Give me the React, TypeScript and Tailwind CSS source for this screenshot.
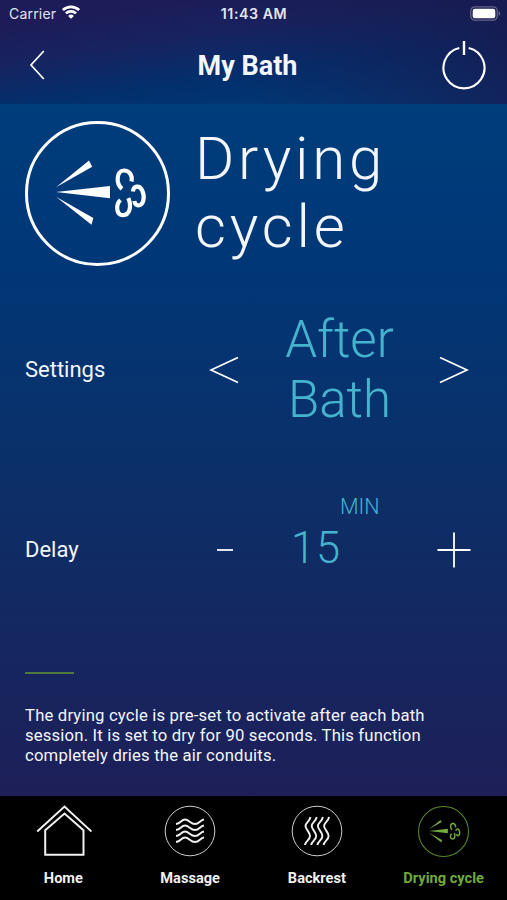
import { ReactNode } from "react"
import clsx from "clsx"

interface IconProps {
    className?: string
}

function WifiIcon({ className }: IconProps) {
    return (
        <svg viewBox="0 0 18 14" fill="none" stroke="currentColor" strokeWidth="2.7" className={className}>
            <path d="M0.9 5.1a11.6 11.6 0 0 1 16.2 0" />
            <path d="M3.9 8.4a7.3 7.3 0 0 1 10.2 0" />
            <path d="M9 13.8l-2.9-2.9a4.2 4.2 0 0 1 5.8 0z" fill="currentColor" stroke="none" />
        </svg>
    )
}

function BatteryIcon({ className }: IconProps) {
    return (
        <svg viewBox="0 0 31 15" className={className}>
            <rect x="0.8" y="0.8" width="26.4" height="13.4" rx="4" fill="none" stroke="#66648c" strokeWidth="1.2" />
            <rect x="2.7" y="2.7" width="22.6" height="9.6" rx="2.2" fill="white" />
            <path d="M28.6 5.2c2.2 1 2.2 3.6 0 4.6z" fill="#66648c" />
        </svg>
    )
}

function PowerIcon({ className }: IconProps) {
    return (
        <svg viewBox="0 0 44 50" fill="none" stroke="white" strokeWidth="2.1" className={className}>
            <path d="M17.3 7.9a20.5 20.5 0 1 0 9.4 0" />
            <path d="M22 1v14" strokeWidth="2.4" />
        </svg>
    )
}

function ChevronIcon({ className }: IconProps) {
    return (
        <svg viewBox="0 0 16 30" fill="none" stroke="white" strokeWidth="1.7" className={className}>
            <path d="M14.8 1L2 15l12.8 14" />
        </svg>
    )
}

function AngleIcon({ className }: IconProps) {
    return (
        <svg viewBox="0 0 30 28" fill="none" stroke="white" strokeWidth="1.8" className={className}>
            <path d="M29 1.5L2 14l27 12.5" />
        </svg>
    )
}

interface DryingIconProps extends IconProps {
    thin?: boolean
}

function DryingIcon({ className, thin }: DryingIconProps) {
    return (
        <svg viewBox="0 0 145 145" fill="none" className={className}>
            <circle cx="72.5" cy="72.5" r="71" stroke="currentColor" strokeWidth="3" opacity={thin ? 0.8 : 1} />
            <g fill="currentColor">
                <path d="M31 66.2L64 39.5l3.2 6.2z" />
                <path d="M31 71L85 65v12.3z" />
                <path d="M31 75.8L68.3 97l-1.8 6.7z" />
            </g>
            <g stroke="currentColor" strokeWidth="4.2">
                <path d="M97 67.8C90.5 62.5 91.5 49.5 99 49.5c5 0 8.800 4.500 7.500 11" />
                <path d="M95.500 79C90.500 83.500 91 93.800 98 94.200c6.500 0 9-8.500 5.300-17" />
                <path d="M107.800 70.500c.8-6.300 7-6.600 9.500-.8 3 7.300 1 14.600-4 14.600-2 0-3.500-1.500-4-4.300" />
            </g>
        </svg>
    )
}

function HomeIcon({ className }: IconProps) {
    return (
        <svg viewBox="0 0 56 52" fill="none" stroke="currentColor" strokeWidth="2" className={className}>
            <path d="M1.2 26.6L28.5 1.5l27 25.1" />
            <path d="M9.2 25.3L28.5 8.6l19 16.7v24.400H9.2z" />
        </svg>
    )
}

function MassageIcon({ className }: IconProps) {
    return (
        <svg viewBox="0 0 52 52" fill="none" stroke="currentColor" className={className}>
            <circle cx="26" cy="26" r="24.8" strokeWidth="1" opacity="0.85" />
            <g strokeWidth="1.9">
                <path d="M12 19c5-.5 5-4.5 9-4.5s5.5 4.5 10 4.5 5-4 9-4.5" />
                <path d="M12 25c5-.5 5-4.5 9-4.5s5.5 4.5 10 4.5 5-4 9-4.5" />
                <path d="M12 31c5-.5 5-4.5 9-4.5s5.5 4.5 10 4.5 5-4 9-4.5" />
                <path d="M12 37c5-.5 5-4.5 9-4.5s5.5 4.5 10 4.5 5-4 9-4.5" />
            </g>
        </svg>
    )
}

function BackrestIcon({ className }: IconProps) {
    return (
        <svg viewBox="0 0 52 52" fill="none" stroke="currentColor" className={className}>
            <circle cx="26" cy="26" r="24.8" strokeWidth="1" opacity="0.85" />
            <g strokeWidth="1.9">
                <path d="M19.5 12c-1 5-5 5.500-5 9s4.500 6 4.500 10-4.500 5-5 9" />
                <path d="M25.7 12c-1 5-5 5.500-5 9s4.500 6 4.500 10-4.500 5-5 9" />
                <path d="M31.9 12c-1 5-5 5.500-5 9s4.500 6 4.500 10-4.500 5-5 9" />
                <path d="M38.1 12c-1 5-5 5.500-5 9s4.500 6 4.500 10-4.500 5-5 9" />
            </g>
        </svg>
    )
}

interface NavItemProps {
    label: string
    active?: boolean
    children: ReactNode
}

function NavItem({ label, active, children }: NavItemProps) {
    return (
        <button className={clsx("flex flex-col items-center pt-2", active ? "text-[#6faa3c]" : "text-[#f0f0f0]")}>
            <span className="flex h-[54px] items-center">{children}</span>
            <span className="mt-[11px] whitespace-nowrap text-[14.6px] leading-[18px] font-bold">{label}</span>
        </button>
    )
}

export default function App() {
    return (
        <div className="flex h-[900px] w-[507px] flex-col overflow-hidden bg-black font-['Roboto',sans-serif] text-[#f3f6fc]">
            <header className="h-[104px] bg-[linear-gradient(172deg,#1d1b58_14%,#17235f_36%,#032f6d_62%,#003a78_90%)]">
                <div className="h-full bg-[linear-gradient(65deg,transparent_45%,#1a184dcc_100%)]">
                    <div className="grid h-7 grid-cols-3 items-center pl-[9px] pr-1.5 font-['Inter',sans-serif] text-[#e4e4f0]">
                        <div className="-mt-0.5 flex items-center gap-1.5 text-[14px] tracking-[0.2px]">
                            <span>Carrier</span>
                            <WifiIcon className="-mt-0.5 h-3.5 w-[18px] text-white" />
                        </div>
                        <span className="pr-0.5 text-center text-[14.2px] font-semibold tracking-[0.55px]">11:43 AM</span>
                        <BatteryIcon className="-mt-0.5 h-[15px] w-[31px] justify-self-end" />
                    </div>

                    <div className="grid h-[76px] grid-cols-[60px_1fr_60px] items-center">
                        <button className="pl-[29px]">
                            <ChevronIcon className="-mt-0.5 h-[30px] w-4" />
                        </button>
                        <h1 className="pr-3 text-center text-[27px] font-bold">My Bath</h1>
                        <button>
                            <PowerIcon className="-mt-0.5 -ml-[5px] h-[50px] w-11" />
                        </button>
                    </div>
                </div>
            </header>

            <main className="flex h-[692px] flex-col bg-[linear-gradient(180deg,#003d7b_0%,#003777_22%,#0b3069_52%,#16265f_80%,#1e1f59_100%)] px-[25px]">
                <div className="flex h-[162px] items-start pt-[17px]">
                    <DryingIcon className="size-[145px] shrink-0 text-white" />
                    <h2 className="ml-[25px] mt-1 w-[220px] text-[60px] leading-[68px] font-light tracking-[3.8px]">Drying cycle</h2>
                </div>

                <section className="mt-[44px] grid h-[120px] grid-cols-[184px_30px_200px_30px] items-center">
                    <span className="-mt-0.5 text-[22px]">Settings</span>
                    <button>
                        <AngleIcon className="h-7 w-[30px]" />
                    </button>
                    <p className="mx-auto w-[130px] pl-px text-center text-[51px] leading-[60px] font-light text-[#45b3ce]">After Bath</p>
                    <button>
                        <AngleIcon className="h-7 w-[30px] rotate-180" />
                    </button>
                </section>

                <section className="mt-[58px] grid h-[90px] grid-cols-[192px_16px_204px_34px] items-end">
                    <span className="pb-[15px] text-[22px] leading-[26px]">Delay</span>
                    <span className="mb-[27px] h-0.5 w-4 bg-[#dfe5f3]" />
                    <div className="flex flex-col pl-[58px] font-light text-[#45b3ce]">
                        <span className="pl-[49px] text-[21.5px] leading-[25px]">MIN</span>
                        <span className="text-[43.5px] leading-[59px] tracking-[0.8px]">15</span>
                    </div>
                    <svg viewBox="0 0 34 36" stroke="white" strokeWidth="1.8" className="mb-2.5 h-9 w-[34px]">
                        <path d="M0.5 18h33M17 0.5v35" />
                    </svg>
                </section>

                <div className="mt-[94px] h-0.5 w-[49px] bg-[#4f793f]" />
                <p className="mt-8 w-[430px] text-[16.7px] leading-5 tracking-[0.17px]">
                    The drying cycle is pre-set to activate after each bath session. It is set to dry for 90 seconds. This function completely dries the air conduits.
                </p>
            </main>

            <nav className="grid h-[104px] grid-cols-4 bg-black">
                <NavItem label="Home">
                    <HomeIcon className="ml-px h-[52px] w-14" />
                </NavItem>
                <NavItem label="Massage">
                    <MassageIcon className="size-[52px]" />
                </NavItem>
                <NavItem label="Backrest">
                    <BackrestIcon className="size-[52px]" />
                </NavItem>
                <NavItem label="Drying cycle" active>
                    <DryingIcon thin className="size-[51px]" />
                </NavItem>
            </nav>
        </div>
    )
}
